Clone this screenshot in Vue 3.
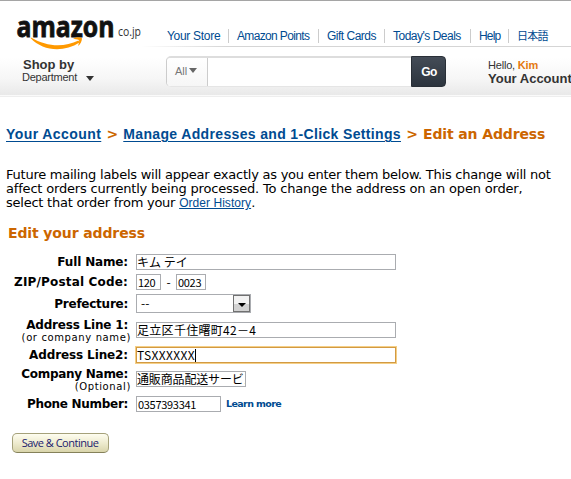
<template>
  <div class="page">
    <header class="header">
      <div class="brand">
        <svg class="logo" width="144" height="52" viewBox="0 0 144 52">
          <text class="logo-name" x="16.5" y="36.5" textLength="98" lengthAdjust="spacingAndGlyphs">amazon</text>
          <text class="logo-tld" x="118" y="36" textLength="23" lengthAdjust="spacingAndGlyphs">co.jp</text>
          <path d="M30.5 38C43 51.500 64 52.500 79.500 42.500L78.500 40.500C64 47.500 47 47 31 37.500Z" fill="#f90" />
          <path d="M73 39C76 36.800 80 37 82 38.200C82 41 80.500 44 78 46C78.500 44 79.500 42 79 40C77 39 75 39 73 39Z" fill="#f90" />
        </svg>
        <div class="shop">
          <strong>Shop by</strong>
          <div class="department"><span>Department</span><i class="arrow"></i></div>
        </div>
      </div>
      <div class="head-main">
        <nav class="nav">
          <a v-for="item in navList" :key="item.text" :style="{ width: item.width + 'px', letterSpacing: item.space + 'px' }">{{ item.text }}</a>
        </nav>
        <div class="tools">
          <div class="search">
            <div class="scope">All<i></i></div>
            <div class="query"></div>
            <button class="go">Go</button>
          </div>
          <div class="account">
            <div class="hello">Hello, <b>Kim</b></div>
            <div class="your-account">Your Account</div>
          </div>
        </div>
      </div>
    </header>

    <main class="content">
      <h1 class="crumbs"><a class="crumb-one">Your Account</a><span class="gt">&gt;</span><a class="crumb-two">Manage Addresses and 1-Click Settings</a><span class="gt">&gt;</span><span class="current">Edit an Address</span></h1>
      <p class="intro">
        <span class="line one">Future mailing labels will appear exactly as you enter them below. This change will not</span>
        <span class="line two">affect orders currently being processed. To change the address on an open order,</span>
        <span class="line three">select that order from your <a>Order History</a>.</span>
      </p>
      <h2 class="title">Edit your address</h2>

      <div class="form">
        <div v-for="row in rows" :key="row.label" class="row" :class="row.type">
          <div class="label">
            <div class="name" :style="{ letterSpacing: row.space + 'px' }">{{ row.label }}</div>
            <div v-if="row.note" class="note">{{ row.note }}</div>
          </div>
          <div class="fields">
            <template v-if="row.type === 'zip'">
              <div class="field zip-one"><span>120</span></div>
              <span class="dash">-</span>
              <div class="field zip-two"><span>0023</span></div>
            </template>
            <div v-else-if="row.type === 'prefecture'" class="select">
              <span>--</span>
              <div class="drop"><i></i></div>
            </div>
            <div v-else class="field"><span>{{ row.value }}</span><i v-if="row.type === 'line2'" class="caret"></i></div>
            <a v-if="row.type === 'phone'" class="learn">Learn more</a>
          </div>
        </div>
      </div>
      <button class="save">Save &amp; Continue</button>
    </main>
  </div>
</template>

<script setup>
const navList = [
  { text: 'Your Store', width: 62, space: -0.3 },
  { text: 'Amazon Points', width: 82, space: -0.65 },
  { text: 'Gift Cards', width: 58, space: -0.5 },
  { text: "Today's Deals", width: 78, space: -0.5 },
  { text: 'Help', width: 30, space: -0.8 },
  { text: '日本語', width: 40, space: -0.8 },
];

const rows = [
  { type: 'full', label: 'Full Name:', space: -0.15, value: 'キム テイ' },
  { type: 'zip', label: 'ZIP/Postal Code:', space: 0.17 },
  { type: 'prefecture', label: 'Prefecture:', space: -0.25 },
  { type: 'line1', label: 'Address Line 1:', note: '(or company name)', space: -0.2, value: '足立区千住曙町42－4' },
  { type: 'line2', label: 'Address Line2:', space: -0.12, value: 'TSXXXXXX' },
  { type: 'company', label: 'Company Name:', note: '(Optional)', space: -0.28, value: '通販商品配送サービス' },
  { type: 'phone', label: 'Phone Number:', space: -0.3, value: '0357393341' },
];
</script>

<style>
body {
  background: #fff;
  overflow: hidden;
}
</style>

<style scoped>
.page {
  width: 571px;
  height: 479px;
  overflow: hidden;
  box-sizing: border-box;
  border-top: 1px solid #a5a5a5;
  font-family: "DejaVu Sans", "Noto Sans CJK JP", sans-serif;
  font-size: 12px;
  color: #000;
}

.header {
  display: flex;
  height: 96px;
  box-sizing: border-box;
  border-bottom: 1px solid #eee;
  box-shadow: inset 0 -1px #fafafa;
  background: linear-gradient(#fff 60%, #f6f6f6 82%, #e8e8e8 100%);
  font-family: "Liberation Sans", "Noto Sans CJK JP", sans-serif;
}

.brand {
  width: 142px;
  flex: none;
}

.logo {
  display: block;
  margin-top: -1px;
  overflow: visible;
}

.logo-name {
  font: bold 29px "Open Sans", sans-serif;
  fill: #111;
  stroke: #111;
  stroke-width: 0.8px;
}

.logo-tld {
  font: 13.5px "Open Sans", sans-serif;
  fill: #333;
}

.shop {
  padding: 5px 0 0 23px;
  color: #333;
}

.shop strong {
  display: block;
  font: bold 13px/15px "Liberation Sans", sans-serif;
}

.department {
  display: flex;
  align-items: center;
  gap: 9px;
  margin-left: -1px;
  font-size: 11px;
  line-height: 11px;
  letter-spacing: -0.25px;
}

.arrow {
  margin-top: 2px;
  border: 4px solid transparent;
  border-top: 5px solid #333;
  border-bottom: 0;
}

.head-main {
  flex: none;
  width: 429px;
}

.nav {
  display: flex;
  align-items: flex-end;
  gap: 8px;
  height: 46px;
  box-sizing: border-box;
  padding: 0 0 3px 25px;
  border-bottom: 1px solid;
  border-image: linear-gradient(90deg, #fff, #d5d5d5 20%) 1;
}

.nav a {
  flex: none;
  box-sizing: border-box;
  height: 14px;
  border-right: 1px solid #ccc;
  line-height: 14px;
  font-size: 12px;
  color: #004b91;
  white-space: nowrap;
}

.nav a:last-child {
  border: 0;
  font-size: 11px;
}

.tools {
  display: flex;
  padding: 9px 0 0 24px;
}

.search {
  display: flex;
  flex: none;
  width: 280px;
  height: 31px;
  box-sizing: border-box;
  border: 1px solid #ccc;
  border-top: 2px solid #ddd;
  border-right: 0;
  border-bottom-color: #e5e5e5;
  border-radius: 5px;
  background: #fff;
}

.scope {
  width: 41px;
  padding-left: 8px;
  box-sizing: border-box;
  border-right: 1px solid #ccc;
  border-radius: 4px 0 0 4px;
  background: linear-gradient(#fff, #f6f6f6);
  font-size: 11px;
  line-height: 27px;
  color: #777;
}

.scope i {
  display: inline-block;
  margin: 0 0 2px 2px;
  border: 4px solid transparent;
  border-top: 5px solid #666;
  border-bottom: 0;
}

.query {
  flex: 1;
}

.go {
  width: 35px;
  height: 31px;
  margin-top: -2px;
  padding: 0 0 0 1px;
  border: 1px solid #292f37;
  border-radius: 0 4px 4px 0;
  background: linear-gradient(#444c57, #2c343e);
  font: bold 12px "Liberation Sans", sans-serif;
  letter-spacing: -0.5px;
  color: #fff;
}

.account {
  padding: 3px 0 0 42px;
  white-space: nowrap;
  color: #333;
}

.hello {
  font-size: 11px;
  line-height: 13px;
  letter-spacing: -0.2px;
}

.hello b {
  color: #e47911;
}

.your-account {
  font-size: 13px;
  line-height: 13px;
  font-weight: bold;
}

.content {
  padding: 28px 0 0 6px;
}

.content a {
  color: #004b91;
}

.crumbs {
  display: flex;
  margin: 0;
  line-height: 18px;
  font-size: 14px;
  white-space: nowrap;
  color: #c60;
}

.crumbs a {
  font-family: "Liberation Sans", sans-serif;
  text-decoration: underline;
  text-decoration-thickness: 1px;
  text-underline-offset: 2px;
}

.crumb-one {
  letter-spacing: 0.42px;
}

.crumb-two {
  letter-spacing: 0.35px;
}

.gt {
  width: 22px;
  text-align: center;
}

.current {
  letter-spacing: -0.13px;
}

.intro {
  margin: 25px 0 0;
  font-size: 13px;
  line-height: 14px;
  white-space: nowrap;
}

.line {
  display: block;
}

.one,
.three {
  letter-spacing: -0.24px;
}

.two {
  letter-spacing: -0.18px;
}

.intro a {
  font: 12px "Liberation Sans", sans-serif;
  letter-spacing: 0.05px;
  text-decoration: underline;
}

.title {
  margin: 14px 0 0 2px;
  line-height: 18px;
  font-size: 14px;
  letter-spacing: -0.12px;
  color: #c60;
}

.form {
  margin-top: 12px;
}

.row {
  display: flex;
  align-items: flex-start;
  height: 20px;
}

.row.prefecture {
  height: 28px;
}

.row.line1 {
  height: 25px;
}

.row.line2 {
  height: 24px;
}

.row.company {
  height: 25px;
}

.label {
  width: 125px;
  margin-right: 5px;
  text-align: right;
  white-space: nowrap;
}

.name {
  padding-right: 3px;
  font-size: 12px;
  font-weight: bold;
  line-height: 16px;
}

.prefecture .name {
  line-height: 20px;
}

.note {
  font-size: 10px;
  line-height: 10px;
  letter-spacing: 0.62px;
}

.line1 .label,
.company .label {
  margin-top: -5px;
}

.fields {
  display: flex;
  align-items: flex-start;
  font-family: "Noto Sans CJK JP", sans-serif;
}

.field {
  display: flex;
  width: 260px;
  height: 16px;
  box-sizing: border-box;
  overflow: hidden;
  border: 1px solid #aaacb0;
  line-height: 14px;
  font-size: 12px;
  white-space: pre;
}

.zip-one {
  width: 25px;
}

.zip-two {
  width: 30px;
}

.zip .field,
.phone .field {
  padding-left: 1px;
  font-size: 11px;
  letter-spacing: -0.3px;
}

.line1 .field {
  letter-spacing: 0.3px;
}

.dash {
  width: 15px;
  text-align: center;
  line-height: 15px;
}

.select {
  display: flex;
  justify-content: space-between;
  width: 115px;
  height: 19px;
  box-sizing: border-box;
  border: 1px solid #aaacb0;
  padding-left: 4px;
  line-height: 16px;
}

.drop {
  display: flex;
  align-items: center;
  justify-content: center;
  width: 17px;
  box-sizing: border-box;
  border: 1px solid #707070;
  background: linear-gradient(#f2f2f2 50%, #d2d2d2 50%);
}

.drop i {
  margin-top: 2px;
  border: 4px solid transparent;
  border-top-color: #000;
  border-bottom: 0;
}

.line2 .field {
  border-color: #d29a43;
  box-shadow: 0 0 0 1px #f5cf86;
  letter-spacing: 0.35px;
}

.caret {
  width: 1px;
  height: 13px;
  margin-top: 1px;
  background: #000;
}

.company .field {
  width: 110px;
  letter-spacing: -0.15px;
}

.phone .field {
  width: 85px;
}

.learn {
  margin-left: 5px;
  font: bold 9.5px/15px "DejaVu Sans", sans-serif;
  letter-spacing: -0.6px;
}

.save {
  display: block;
  width: 97px;
  height: 20px;
  margin: 17px 0 0 6px;
  padding: 0 1px 1px 0;
  border: 1px solid #a5a17a;
  border-bottom-color: #85815a;
  border-radius: 5px;
  background: linear-gradient(#fefdf0, #eeebcf 50%, #d9d5ab);
  font: 11px "Open Sans", sans-serif;
  letter-spacing: -0.5px;
  color: #1a1a6c;
}
</style>
